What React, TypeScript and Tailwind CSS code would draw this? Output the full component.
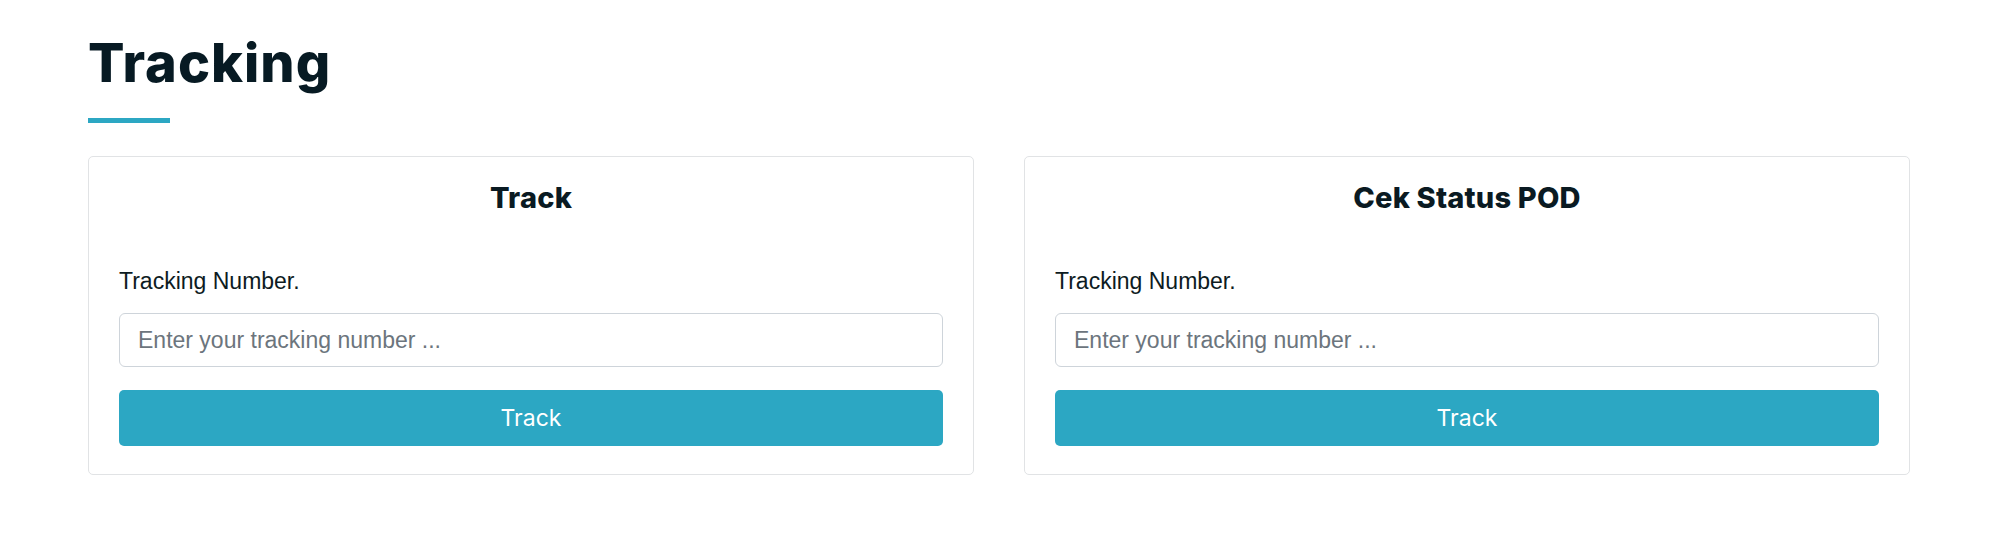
import React from "react";

function Card({ title }: { title: string }) {
  return (
    <div className="w-[886px] rounded-[5px] border border-[#e1e3e5] bg-white px-[30px] pt-[23px] pb-[28px]">
      <h3 className="text-center font-['Inter',sans-serif] text-[29px] leading-[36px] font-extrabold tracking-[0.2px] text-[#0a1a22]">
        {title}
      </h3>
      <label className="mt-[51px] block font-['Liberation_Sans',Arial,sans-serif] text-[23px] leading-[28px] text-[#0d1b22]">
        Tracking Number.
      </label>
      <input
        type="text"
        placeholder="Enter your tracking number ..."
        className="mt-[18px] block h-[54px] w-full rounded-[6px] border border-[#ced4da] bg-white pl-[18px] font-['Liberation_Sans',Arial,sans-serif] text-[23px] text-[#212529] outline-none placeholder:text-[#6c757d]"
      />
      <button className="mt-[23px] flex h-[56px] w-full items-center justify-center rounded-[5px] bg-[#2ca7c3] font-['Inter',sans-serif] text-[23px] text-white">
        Track
      </button>
    </div>
  );
}

export default function App() {
  return (
    <div className="min-h-[560px] bg-white pt-[36px] pl-[88px]">
      <h1 className="font-['Inter',sans-serif] text-[54px] leading-[54px] font-extrabold tracking-[1px] text-[#071a23]">
        Tracking
      </h1>
      <div className="mt-[28px] h-[5px] w-[82px] bg-[#2ca7c3]" />
      <div className="mt-[33px] flex gap-[50px]">
        <Card title="Track" />
        <Card title="Cek Status POD" />
      </div>
    </div>
  );
}
